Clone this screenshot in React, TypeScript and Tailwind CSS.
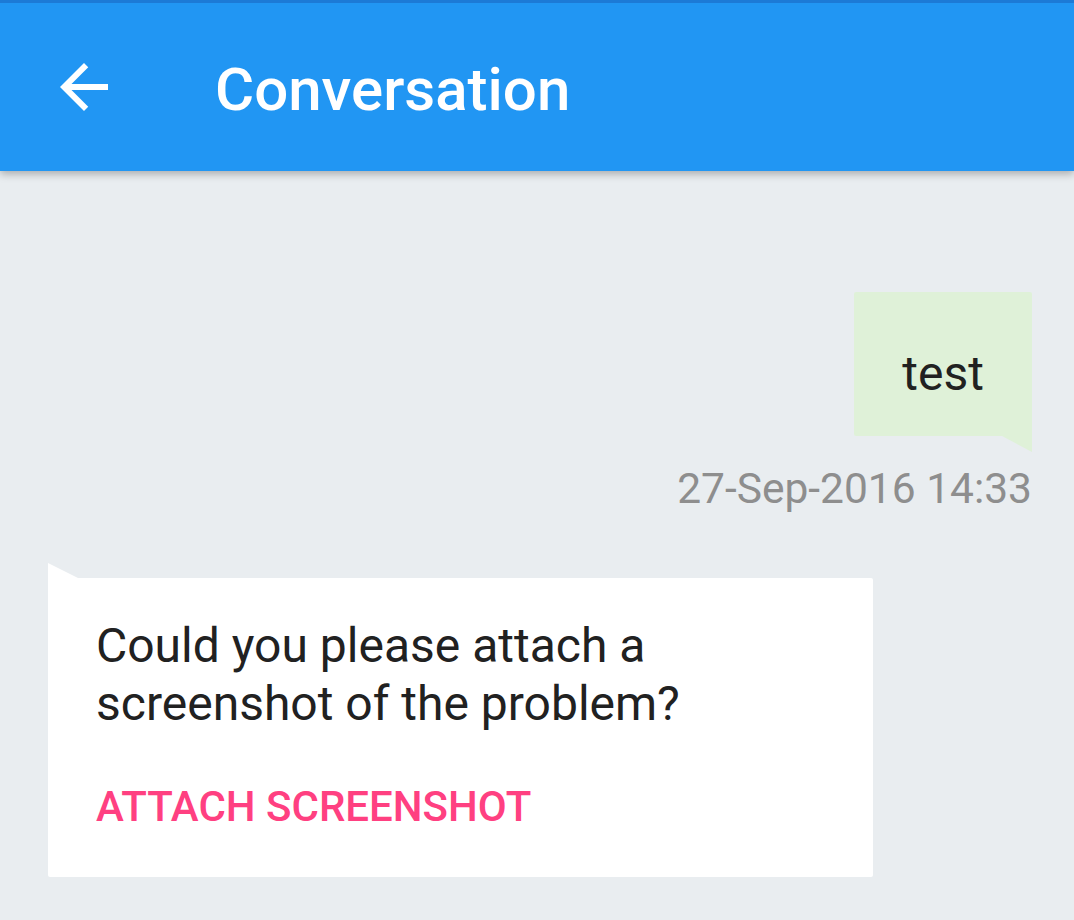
import React from 'react'

const font = { fontFamily: 'Roboto, "Noto Sans", sans-serif' }

function BackArrow() {
  return (
    <svg width="72" height="72" viewBox="0 0 24 24" fill="#ffffff" aria-hidden="true">
      <path d="M20 11H7.83l5.59-5.59L12 4l-8 8 8 8 1.41-1.41L7.83 13H20v-2z" />
    </svg>
  )
}

function OutgoingMessage({ text, time }: { text: string; time: string }) {
  return (
    <div className="flex flex-col items-end">
      <div className="relative bg-[#dff1d8] px-[48px] pt-[53px] pb-[33px] rounded-t-[2px] rounded-bl-[2px]">
        <p className="text-[48px] leading-[58px] text-[#212121]">{text}</p>
        {/* tail */}
        <svg className="absolute right-0 top-full" width="30" height="16" viewBox="0 0 30 16">
          <polygon points="0,0 30,0 30,16" fill="#dff1d8" />
        </svg>
      </div>
      <span className="mt-[29px] text-[42.5px] leading-[48px] text-[#8e8e8e]">{time}</span>
    </div>
  )
}

function IncomingMessage() {
  return (
    <div className="relative w-[825px] bg-white pl-[48px] pr-[48px] pt-[39px] pb-[46px] rounded-b-[2px] rounded-tr-[2px]">
      <svg className="absolute left-0 bottom-full" width="30" height="15" viewBox="0 0 30 15">
        <polygon points="0,0 30,15 0,15" fill="#ffffff" />
      </svg>
      <p className="text-[48px] leading-[58px] text-[#212121]">
        Could you please attach a screenshot of the problem?
      </p>
      <button className="mt-[50px] block text-[42px] leading-[48px] font-medium text-[#ff4081] uppercase">
        Attach screenshot
      </button>
    </div>
  )
}

export default function App() {
  return (
    <div className="min-h-[920px] w-full bg-[#e9edf0] flex flex-col" style={font}>
      <div className="relative z-10 shadow-[0_3px_8px_rgba(0,0,0,0.28)]">
        <div className="h-[3px] bg-[#1c7ad6]" />
        <header className="h-[168px] bg-[#2196f3] flex items-center pl-[48px]">
          <BackArrow />
          <h1 className="ml-[95px] pt-[5px] text-[60px] leading-[60px] font-medium text-white">
            Conversation
          </h1>
        </header>
      </div>

      <main className="flex flex-col pl-[48px] pr-[42px] pt-[121px]">
        <OutgoingMessage text="test" time="27-Sep-2016 14:33" />
        <div className="mt-[65px]">
          <IncomingMessage />
        </div>
      </main>
    </div>
  )
}
